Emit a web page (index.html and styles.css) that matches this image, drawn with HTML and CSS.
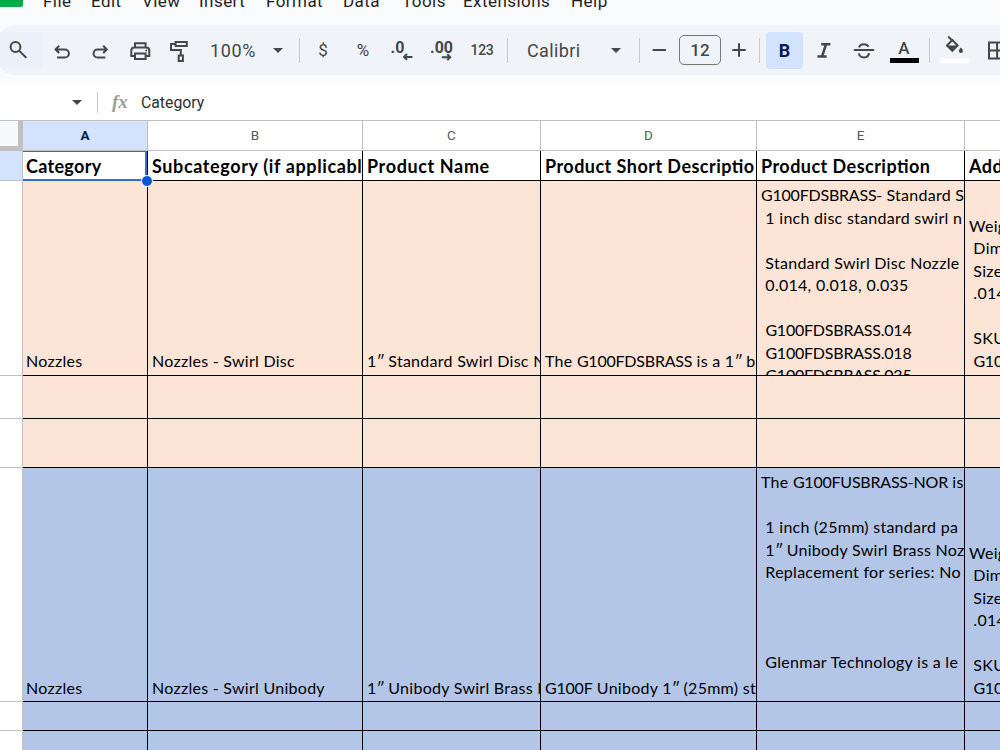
FILE: index.html
```html
<!DOCTYPE html>
<html lang="en">
<head>
  <meta charset="UTF-8">
  <title>Product sheet</title>
  <link rel="stylesheet" href="styles.css">
</head>
<body>

<div class="app">
  <nav class="menubar">
    <div class="logo"></div>
    <span class="menu m-file">File</span>
    <span class="menu m-edit">Edit</span>
    <span class="menu m-view">View</span>
    <span class="menu m-insert">Insert</span>
    <span class="menu m-format">Format</span>
    <span class="menu m-data">Data</span>
    <span class="menu m-tools">Tools</span>
    <span class="menu m-ext">Extensions</span>
    <span class="menu">Help</span>
  </nav>

  <div class="toolbar">
    <div class="btn search">
      <svg width="24" height="24" viewBox="0 0 24 24"><circle cx="9.5" cy="9" r="4.9"/><path d="M13 12.6l7.3 7.2"/></svg>
    </div>
    <div class="btn w38">
      <svg width="24" height="24" viewBox="0 0 24 24"><path d="M9.2 7.8L5.6 11.4 9.2 15M6 11.4h8.8a4.1 4.1 0 0 1 0 8.2H7"/></svg>
    </div>
    <div class="btn w38">
      <svg width="24" height="24" viewBox="0 0 24 24"><path d="M15.2 7.8l3.6 3.6-3.6 3.6M18.4 11.4H9.6a4.1 4.1 0 0 0 0 8.2h7.8"/></svg>
    </div>
    <div class="btn w42">
      <svg width="24" height="24" viewBox="0 0 24 24"><path d="M7 9.3V5.3h10.6v4M7 18H3.3v-5.6a3 3 0 0 1 3-3h12a3 3 0 0 1 3 3V18h-3.7M7 15.4h10.6v5.7H7z"/><circle class="solid" cx="18.3" cy="12.6" r="1"/></svg>
    </div>
    <div class="btn w36">
      <svg width="24" height="24" viewBox="0 0 24 24"><path d="M8.6 4h11.2v4H8.6zM8.6 6H4v6h9.8v5M11.7 17.5h4.2V23h-4.2z"/></svg>
    </div>
    <div class="zoom">100%</div>
    <div class="caret zoom-caret"></div>
    <div class="sep"></div>
    <div class="btn glyph dollar">$</div>
    <div class="btn glyph w36">%</div>
    <div class="btn w42">
      <svg width="24" height="24" viewBox="0 0 24 24"><text x="0.6" y="14.6">.0</text><path d="M22.4 18.9h-8M17 16l-2.9 2.9 2.9 2.9"/></svg>
    </div>
    <div class="btn w36">
      <svg width="24" height="24" viewBox="0 0 24 24"><text x="1" y="14.6">.00</text><path d="M12.8 19.2h8M18.3 16.3l2.9 2.9-2.9 2.9"/></svg>
    </div>
    <div class="btn num">123</div>
    <div class="sep"></div>
    <div class="font">Calibri</div>
    <div class="caret font-caret"></div>
    <div class="sep"></div>
    <div class="btn w39">
      <svg width="24" height="24" viewBox="0 0 24 24"><path d="M4.6 12H18"/></svg>
    </div>
    <div class="size">12</div>
    <div class="btn w38">
      <svg width="24" height="24" viewBox="0 0 24 24"><path d="M4.3 12h13.4M11 5.3v13.4"/></svg>
    </div>
    <div class="sep"></div>
    <div class="btn bold">B</div>
    <div class="btn w42">
      <svg width="24" height="24" viewBox="0 0 24 24"><path class="heavy" d="M9.2 6.3h9.2M5.4 18.6h9.2M14 6.3L10 18.6"/></svg>
    </div>
    <div class="btn w38">
      <svg width="24" height="24" viewBox="0 0 24 24"><path d="M1.8 12.1h20.4M7.2 9.5C7.6 7.3 9.6 6.3 12 6.3c2 0 3.6.8 4.4 2.4M6.8 15.4c.6 2.6 2.6 4 5.2 4 2.8 0 4.9-1.6 4.9-4.4"/></svg>
    </div>
    <div class="btn w42 color">
      <span class="color-letter">A</span>
      <span class="swatch black"></span>
    </div>
    <div class="sep color-sep"></div>
    <div class="btn w48 color">
      <svg class="bucket" width="24" height="24" viewBox="0 0 24 24"><path d="M6.3 1.5l3.4 3.6M10.3 5l5.3 5.5-5.3 5.3L5 10.5z"/><path class="solid" d="M5 10.5h10.6l-5.3 5.3zM18.9 12.6c1.3 1.6 2 2.6 2 3.4a2 2 0 0 1-4 0c0-.8.7-1.8 2-3.4z"/></svg>
      <span class="swatch white"></span>
    </div>
    <div class="btn w39">
      <svg width="24" height="24" viewBox="0 0 24 24"><path d="M3 4.6h16.2v16H3zM11.1 4.6v16M3 12.6h16.2"/></svg>
    </div>
  </div>

  <div class="formula">
    <div class="caret"></div>
    <div class="formula-sep"></div>
    <span class="fx">fx</span>
    <span class="formula-text">Category</span>
  </div>

  <div class="sheet">
    <div class="corner"></div>
    <div class="col-head selected">A</div>
    <div class="col-head">B</div>
    <div class="col-head">C</div>
    <div class="col-head">D</div>
    <div class="col-head">E</div>
    <div class="col-head"></div>

    <div class="row-head selected"></div>
    <div class="cell title active"><p>Category</p><i class="handle"></i></div>
    <div class="cell title wide"><p>Subcategory (if applicabl</p></div>
    <div class="cell title wide"><p>Product Name</p></div>
    <div class="cell title"><p>Product Short Descriptio</p></div>
    <div class="cell title"><p>Product Description</p></div>
    <div class="cell title"><p>Addit</p></div>

    <div class="row-head"></div>
    <div class="cell peach raised"><p>Nozzles</p></div>
    <div class="cell peach raised"><p>Nozzles - Swirl Disc</p></div>
    <div class="cell peach raised"><p>1<span class="inch">″</span> Standard Swirl Disc N</p></div>
    <div class="cell peach raised"><p>The <span class="sku">G100FDSBRASS</span> is a 1<span class="inch">″</span> b</p></div>
    <div class="cell peach top"><p><span class="sku">G100FDSBRASS-</span> Standard S
 1 inch disc standard swirl n

 Standard Swirl Disc Nozzle
 0.014, 0.018, 0.035

 <span class="sku">G100FDSBRASS.014</span>
 <span class="sku">G100FDSBRASS.018</span>
 <span class="sku">G100FDSBRASS.035</span></p></div>
    <div class="cell peach raised"><p>Weig
 Dim
 Size
 .014

 SKU
 <span class="sku">G100</span></p></div>

    <div class="row-head"></div>
    <div class="cell peach"></div>
    <div class="cell peach"></div>
    <div class="cell peach"></div>
    <div class="cell peach"></div>
    <div class="cell peach"></div>
    <div class="cell peach"></div>

    <div class="row-head"></div>
    <div class="cell peach"></div>
    <div class="cell peach"></div>
    <div class="cell peach"></div>
    <div class="cell peach"></div>
    <div class="cell peach"></div>
    <div class="cell peach"></div>

    <div class="row-head"></div>
    <div class="cell blue"><p>Nozzles</p></div>
    <div class="cell blue"><p>Nozzles - Swirl Unibody</p></div>
    <div class="cell blue"><p>1<span class="inch">″</span> Unibody Swirl Brass N</p></div>
    <div class="cell blue"><p><span class="sku">G100F</span> Unibody 1<span class="inch">″</span> (25mm) st</p></div>
    <div class="cell blue top"><p>The <span class="sku">G100FUSBRASS-NOR</span> is

 1 inch (25mm) standard pa
 1<span class="inch">″</span> Unibody Swirl Brass Noz
 Replacement for series: No



 Glenmar Technology is a le</p></div>
    <div class="cell blue"><p>Weig
 Dim
 Size
 .014

 SKU
 <span class="sku">G100</span></p></div>

    <div class="row-head"></div>
    <div class="cell blue"></div>
    <div class="cell blue"></div>
    <div class="cell blue"></div>
    <div class="cell blue"></div>
    <div class="cell blue"></div>
    <div class="cell blue"></div>

    <div class="row-head"></div>
    <div class="cell blue"></div>
    <div class="cell blue"></div>
    <div class="cell blue"></div>
    <div class="cell blue"></div>
    <div class="cell blue"></div>
    <div class="cell blue"></div>
  </div>
</div>

</body>
</html>
```
FILE: styles.css
```css
* {
  box-sizing: border-box;
}

html, body {
  margin: 0;
  padding: 0;
  overflow: hidden;
}

.app {
  width: 1000px;
  height: 750px;
  overflow: hidden;
  background: #f9fbfd;
  font-family: Roboto, "Liberation Sans", sans-serif;
  color: #444746;
}

/* menu bar, scrolled half out of view */
.menubar {
  display: flex;
  align-items: flex-end;
  height: 10px;
  margin-bottom: 15px;
}

.logo {
  flex: none;
  width: 23px;
  height: 7px;
  margin-right: 20px;
  align-self: flex-start;
  background: #00ac47;
  border-radius: 0 0 2px 0;
}

.menu {
  flex: none;
  font-size: 17px;
  line-height: 18px;
  letter-spacing: 0.45px;
  color: #1f1f1f;
}

.m-file { width: 48px; }
.m-edit { width: 51px; }
.m-view { width: 57px; }
.m-insert { width: 67px; }
.m-format { width: 77px; }
.m-data { width: 59px; }
.m-tools { width: 61px; }
.m-ext { width: 108px; }

/* toolbar */
.toolbar {
  display: flex;
  align-items: center;
  width: 1030px;
  height: 50px;
  background: #f0f4f9;
  border-radius: 14px 0 0 14px;
}

.toolbar > div {
  flex: none;
}

.btn {
  display: flex;
  align-items: center;
  justify-content: center;
  height: 36px;
}

.w36 { width: 36px; }
.w38 { width: 38px; }
.w39 { width: 39px; }
.w42 { width: 42px; }
.w48 { width: 48px; }

.btn svg {
  flex: none;
  overflow: visible;
  fill: none;
  stroke: #444746;
  stroke-width: 2;
}

.btn svg text {
  fill: #444746;
  stroke: none;
  font-size: 16px;
  font-weight: 700;
}

.btn svg .solid {
  fill: #444746;
  stroke: none;
}

.btn svg .heavy {
  stroke-width: 2.5;
}

.search {
  width: 43px;
  padding-right: 7px;
  background: #ebf0fb;
}

.zoom {
  width: 63px;
  padding-left: 13px;
  font-size: 18px;
  letter-spacing: 0.6px;
}

.caret {
  width: 0;
  height: 0;
  border: 5px solid transparent;
  border-top-color: #444746;
  border-bottom: 0;
}

.zoom-caret { margin: 0 16px 0 13px; }
.font-caret { margin-right: 18px; }

.sep {
  width: 1px;
  height: 25px;
  background: #c7c9cc;
}

.glyph {
  font-size: 17px;
}

.dollar {
  width: 44px;
  margin-left: 1px;
}

.num {
  width: 46px;
  margin-right: 2px;
  font-size: 14px;
  font-weight: 500;
  letter-spacing: -0.3px;
}

.font {
  width: 103px;
  padding-left: 19px;
  font-size: 18px;
  letter-spacing: 0.4px;
}

.size {
  width: 42px;
  height: 30px;
  border: 1px solid #747775;
  border-radius: 5px;
  font-size: 17px;
  font-weight: 500;
  line-height: 28px;
  text-align: center;
}

.bold {
  width: 37px;
  height: 37px;
  margin-left: 6px;
  border-radius: 4px;
  background: #d3e3fd;
  color: #041e49;
  font-size: 18px;
  font-weight: 700;
}

.color {
  flex-direction: column;
  justify-content: flex-end;
}

.color-letter {
  font-size: 17px;
  font-weight: 500;
  line-height: 20px;
}

.color-sep {
  margin-left: 4px;
}

.bucket {
  margin-bottom: -1px;
}

.swatch {
  width: 29px;
  height: 5px;
  margin-bottom: 5px;
}

.swatch.black { background: #000; }
.swatch.white { background: #fff; }

/* formula bar */
.formula {
  display: flex;
  align-items: center;
  height: 36px;
  margin-top: 9px;
  padding-left: 72px;
  background: #fff;
}

.formula-sep {
  width: 1px;
  height: 21px;
  margin: 0 14px 0 15px;
  background: #c7c9cc;
}

.fx {
  width: 29px;
  font: italic bold 19px "Liberation Serif", serif;
  color: #9a9c9b;
}

.formula-text {
  font-size: 15.8px;
  color: #303030;
}

/* grid */
.sheet {
  display: grid;
  grid-template-columns: 23px 125px 215px 178px 216px 208px 200px;
  grid-template-rows: 30px 30px 195px 43px 49px 234px 29px 40px;
  border-top: 1px solid #c0c0c0;
  background: #fff;
}

.corner {
  background: #f8f9fa;
  border-right: 5px solid #c0c0c0;
  border-bottom: 5px solid #c0c0c0;
}

.col-head {
  border-right: 1px solid #c0c0c0;
  border-bottom: 1px solid #c0c0c0;
  font-size: 13.5px;
  line-height: 29px;
  text-align: center;
  color: #575a5a;
}

.row-head {
  border-right: 1px solid #c0c0c0;
  border-bottom: 1px solid #c0c0c0;
}

.selected {
  background: #d3e3fd;
  color: #041e49;
  font-weight: 700;
}

.cell {
  display: flex;
  align-items: flex-end;
  min-width: 0;
  padding: 0 0 2px 4px;
  overflow: hidden;
  border-right: 1px solid #000;
  border-bottom: 1px solid #000;
  font-family: Lato, Carlito, sans-serif;
  font-size: 16px;
  line-height: 22.5px;
  letter-spacing: 0.27px;
  color: #000;
}

.cell p {
  margin: 0;
  white-space: pre;
}

.cell.top {
  align-items: flex-start;
  padding-top: 3px;
}

.cell.raised {
  padding-bottom: 3px;
}

.sku {
  letter-spacing: -0.22px;
}

.inch {
  letter-spacing: -1px;
}

.peach { background: #fce4d6; }
.blue { background: #b4c6e7; }

.row-head + .cell {
  padding-left: 3px;
}

.cell.title {
  padding-bottom: 3px;
  font-size: 18px;
  font-weight: 700;
  letter-spacing: 0.46px;
  font-feature-settings: "liga" 1;
}

.cell.wide {
  letter-spacing: 0.62px;
}

.cell.active {
  position: relative;
  overflow: visible;
  box-shadow: inset 0 1px #2f6fd6, inset -2px -1px #2f6fd6;
  border-bottom-color: #2f6fd6;
  letter-spacing: 0.3px;
}

/* fill handle */
.handle {
  position: absolute;
  right: -6px;
  bottom: -7px;
  z-index: 1;
  width: 12px;
  height: 12px;
  border: 1px solid #fff;
  border-radius: 50%;
  background: #0b57d0;
}
```
